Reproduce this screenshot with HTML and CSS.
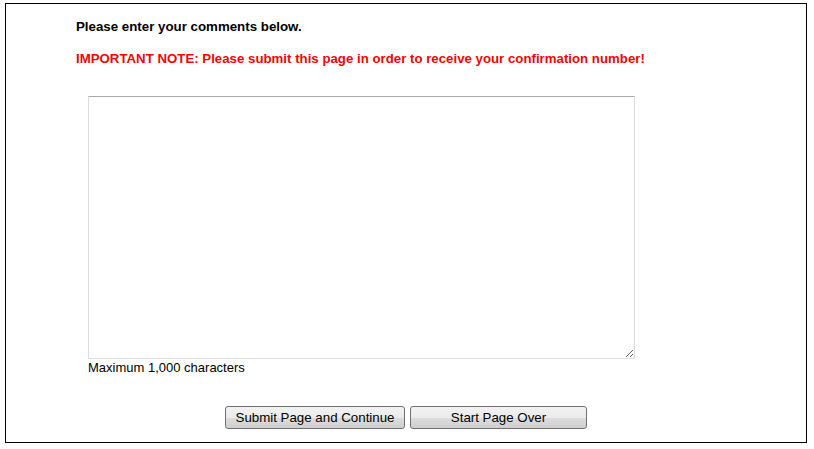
FILE: index.html
```html
<html>
  <head>
    <link rel="stylesheet" href="styles.css">
    <title>Comments</title>
  </head>
  <body>
    <form class="page" action="#" method="post">
      <p class="intro">Please enter your comments below.</p>
      <p class="note">IMPORTANT NOTE: Please submit this page in order to receive your confirmation number!</p>

      <div class="comments">
        <textarea name="comments" maxlength="1000"></textarea>
        <div class="hint">Maximum 1,000 characters</div>
      </div>

      <div class="buttons">
        <button type="submit" class="btn wide" name="action" value="submit">Submit Page and Continue</button>
        <button type="reset" class="btn" name="action" value="reset">Start Page Over</button>
      </div>
    </form>
  </body>
</html>
```

FILE: styles.css
```css
body {margin:0; padding:3px 7px 0 5px; font-family:"Liberation Sans", Arial, sans-serif; font-size:13px; color:#000; background:#fff;}
.page {box-sizing:border-box; width:802px; height:440px; border:1px solid #000; margin:0; padding:15px 0 0 70px;}
.intro {font-weight:bold; font-size:13.3px; margin:0; line-height:16px;}
.note {font-weight:bold; font-size:13.25px; color:#f00; margin:16px 0 0 0; line-height:16px;}
.comments {margin:29px 0 0 12px;}
textarea {display:block; box-sizing:border-box; width:547px; height:263px; margin:0; border:1px solid #dcdce0; border-top-color:#ababab; font-family:"Liberation Sans", Arial, sans-serif; font-size:13px;}
.hint {margin-top:1px; line-height:16px;}
.buttons {display:flex; justify-content:center; gap:5px; margin:30px 0 0 -70px;}
.btn {box-sizing:border-box; height:23px; width:177px; padding:0 4px; border:1px solid #707070; border-radius:3px; background:linear-gradient(#f2f2f2 0%, #ebebeb 50%, #dddddd 51%, #cfcfcf 100%); font-family:"Liberation Sans", Arial, sans-serif; font-size:13.3px; color:#000;}
.wide {width:180px;}
```
